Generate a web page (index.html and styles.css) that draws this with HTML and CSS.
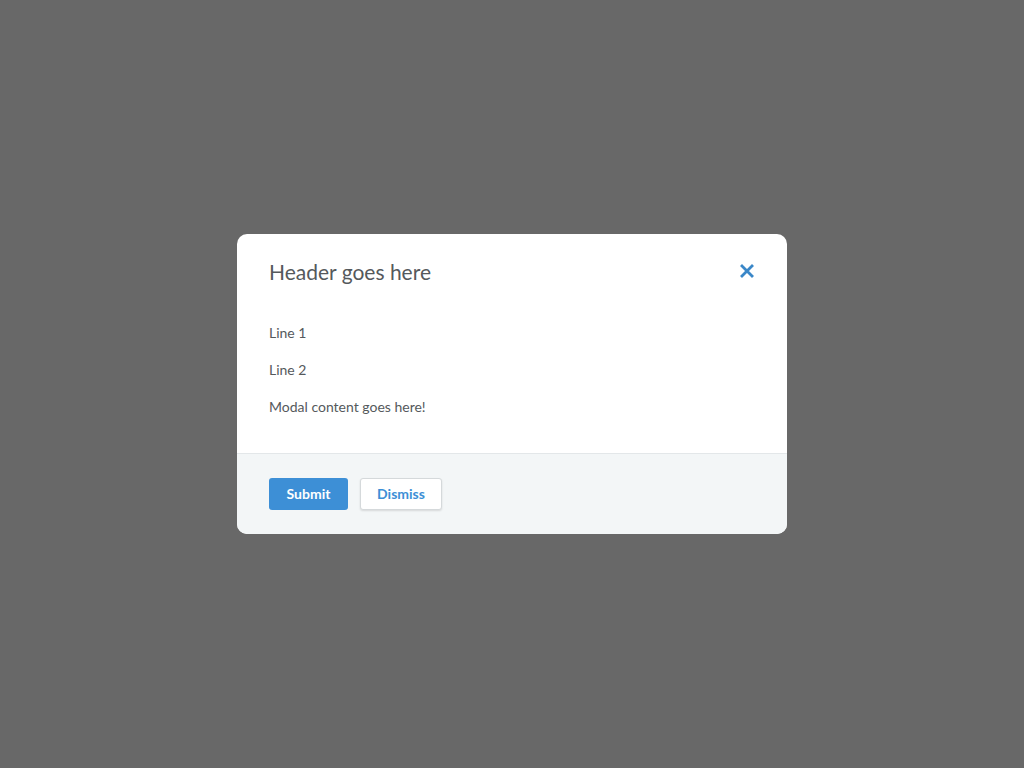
FILE: index.html
```html
<!DOCTYPE html>
<html>
<head>
<meta charset="utf-8">
<link rel="stylesheet" href="styles.css">
</head>
<body>
<div class="overlay">
  <div class="modal">
    <div class="modal-header">
      <h2 class="modal-title">Header goes here</h2>
      <button class="close" aria-label="Close">
        <svg width="14" height="14" viewBox="0 0 14 14"><path d="M2 2 L12 12 M12 2 L2 12" stroke="#3a87c8" stroke-width="2.8" stroke-linecap="square" fill="none"/></svg>
      </button>
    </div>
    <div class="modal-body">
      <p>Line 1</p>
      <p>Line 2</p>
      <p>Modal content goes here!</p>
    </div>
    <div class="modal-footer">
      <button class="btn btn-primary">Submit</button>
      <button class="btn btn-default">Dismiss</button>
    </div>
  </div>
</div>
</body>
</html>
```

FILE: styles.css
```css
* { box-sizing: border-box; }
html, body { margin: 0; height: 100%; }
body {
  font-family: Lato, "Open Sans", sans-serif;
  background: #686868;
}
.overlay {
  height: 768px;
  display: flex;
  align-items: center;
  justify-content: center;
}
.modal {
  width: 550px;
  height: 300px;
  background: #fff;
  border-radius: 10px;
  overflow: hidden;
  display: flex;
  flex-direction: column;
}
.modal-header {
  display: flex;
  align-items: center;
  justify-content: space-between;
  padding: 23px 33px 0 32px;
}
.modal-title {
  margin: 0;
  font-size: 21px;
  line-height: 29px;
  font-weight: 400;
  color: #55595c;
}
.close {
  background: none;
  border: 0;
  padding: 0;
  width: 14px;
  height: 14px;
  display: flex;
  margin-top: -2px;
}
.modal-body {
  padding: 36px 32px 36px 32px;
  flex: 1;
}
.modal-body p {
  margin: 0 0 16px 0;
  font-size: 14px;
  line-height: 21px;
  color: #55595c;
}
.modal-body p:last-child { margin-bottom: 0; }
.modal-footer {
  background: #f3f6f7;
  border-top: 1px solid #e3e7e9;
  padding: 24px 32px;
  display: flex;
  gap: 12px;
}
.btn {
  height: 32px;
  font-family: Lato, sans-serif;
  font-size: 14px;
  font-weight: 700;
  border-radius: 3px;
  padding: 0 16px 2px 16px;
}
.btn-primary {
  width: 79px;
  background: #3d8fd6;
  color: #fff;
  border: 0;
}
.btn-default {
  width: 82px;
  background: #fff;
  color: #3d8fd6;
  border: 1px solid #d5d9db;
  box-shadow: 0 1px 2px rgba(0,0,0,0.12);
}
```
